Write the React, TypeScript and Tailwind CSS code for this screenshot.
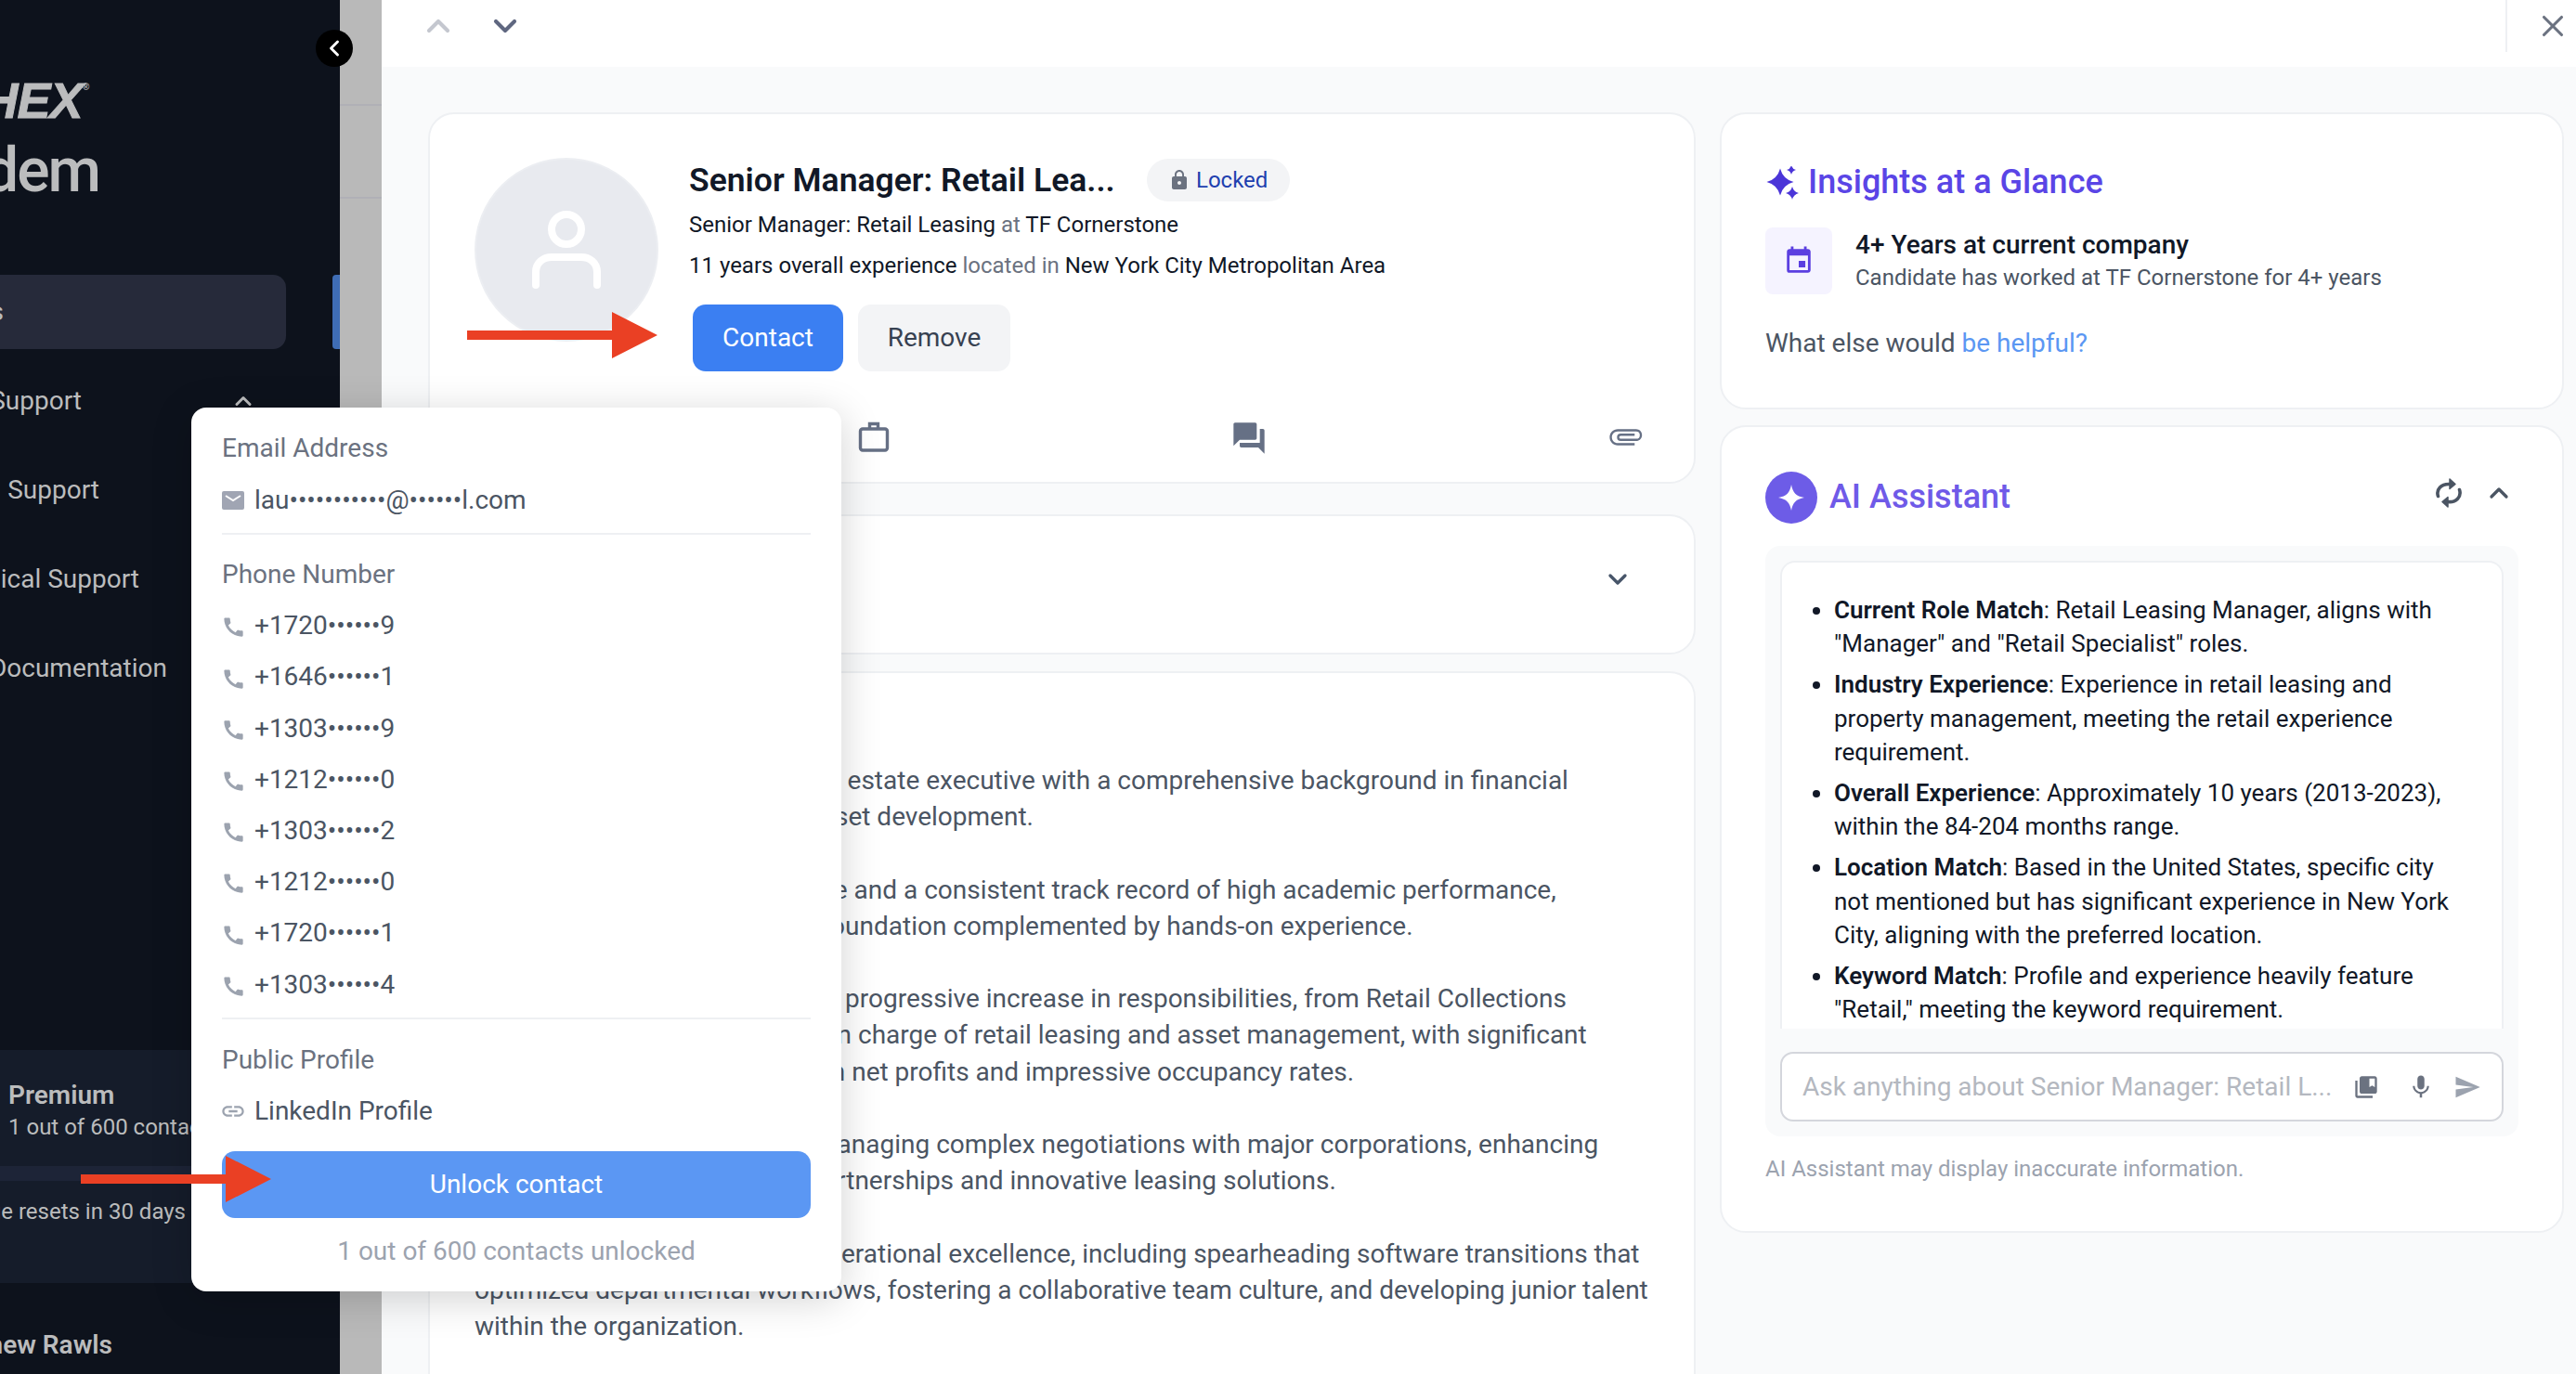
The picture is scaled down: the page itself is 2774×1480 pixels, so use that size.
import { ChevronDown, ChevronLeft, ChevronUp, X } from "lucide-react";
import {
  MdCall,
  MdCollectionsBookmark,
  MdEvent,
  MdForum,
  MdLink,
  MdLock,
  MdMic,
  MdOutlineAttachment,
  MdSend,
} from "react-icons/md";

const phones = [
  "+1720••••••9",
  "+1646••••••1",
  "+1303••••••9",
  "+1212••••••0",
  "+1303••••••2",
  "+1212••••••0",
  "+1720••••••1",
  "+1303••••••4",
];

const aiPoints = [
  ["Current Role Match", ': Retail Leasing Manager, aligns with "Manager" and "Retail Specialist" roles.'],
  ["Industry Experience", ": Experience in retail leasing and property management, meeting the retail experience requirement."],
  ["Overall Experience", ": Approximately 10 years (2013-2023), within the 84-204 months range."],
  ["Location Match", ": Based in the United States, specific city not mentioned but has significant experience in New York City, aligning with the preferred location."],
  ["Keyword Match", ': Profile and experience heavily feature "Retail," meeting the keyword requirement.'],
];

function Arrow({ className }: { className: string }) {
  return (
    <svg viewBox="0 0 205 50" className={className}>
      <path d="M0 20h156V0l49 25-49 25V30H0z" fill="#ea4024" />
    </svg>
  );
}

function ContactPopover() {
  return (
    <div className="absolute left-[206px] top-[439px] z-20 h-[952px] w-[700px] rounded-[16px] bg-white px-[33px] pt-[24px] text-[28px] leading-[39.400px] text-[#4b5563] shadow-[0_8px_44px_rgba(0,0,0,0.18)]">
      <p className="text-[#6b7280]">Email Address</p>
      <div className="mt-[17px] flex items-center gap-[11px]">
        <svg viewBox="0 0 24 20" className="h-[20px] w-[24px] shrink-0">
          <rect width="24" height="20" rx="2" fill="#a0a5b3" />
          <path d="M4 5l8 5 8-5" fill="none" stroke="white" strokeWidth="2" />
        </svg>
        <span>lau•••••••••••@••••••l.com</span>
      </div>
      <div className="mt-[15px] h-[2px] bg-[#eef0f3]" />
      <p className="mt-[23px] text-[#6b7280]">Phone Number</p>
      <div className="mt-[16px] flex flex-col gap-[15.800px]">
        {phones.map((phone, i) => (
          <div key={i} className="flex items-center gap-[9px]">
            <MdCall className="-ml-[1px] h-[27px] w-[27px] shrink-0 translate-y-[2px] text-[#9ca3af]" />
            <span>{phone}</span>
          </div>
        ))}
      </div>
      <div className="mt-[16px] h-[2px] bg-[#eef0f3]" />
      <p className="mt-[24px] text-[#6b7280]">Public Profile</p>
      <div className="mt-[16px] flex items-center gap-[9px]">
        <MdLink className="-ml-[2px] h-[28px] w-[28px] shrink-0 text-[#9ca3af]" />
        <span>LinkedIn Profile</span>
      </div>
      <button className="mt-[23px] flex h-[72px] w-full items-center justify-center rounded-[14px] bg-[#5b97f3] text-white">
        Unlock contact
      </button>
      <p className="mt-[16px] text-center text-[#9ca3af]">1 out of 600 contacts unlocked</p>
    </div>
  );
}

function Sidebar() {
  return (
    <aside className="flex h-full w-[366px] shrink-0 flex-col overflow-hidden bg-[#0d121c] text-[#bbbcbd]">
      <div className="mt-[86px] flex h-[44px] w-[95px] justify-end whitespace-nowrap font-['Liberation_Sans',sans-serif] text-[54px] font-bold italic leading-[44px] tracking-[-1px] [-webkit-text-stroke:1px_#bbbcbd]">
        HEX<span className="text-[10px] leading-[16px] [-webkit-text-stroke:0]">®</span>
      </div>
      <div className="mt-[19px] flex h-[70px] w-[107px] justify-end whitespace-nowrap text-[66px] font-medium leading-[70px] tracking-[-2px]">
        Tandem
      </div>
      <div className="mt-[77px] flex h-[80px] items-center justify-between">
        <div className="flex h-full w-[308px] items-center rounded-r-[14px] bg-[#262a3a] text-[28px]">
          <span className="flex w-[4px] justify-end whitespace-nowrap">Contacts</span>
        </div>
        <div className="h-full w-[8px] rounded-l-[4px] bg-[#3f6db5]" />
      </div>
      <div className="mt-[8px] flex h-[96px] items-center text-[28px]">
        <span className="flex w-[88px] justify-end whitespace-nowrap">Customer Support</span>
        <ChevronUp className="ml-[160px] h-[28px] w-[28px]" strokeWidth={2.500} />
      </div>
      <div className="flex h-[96px] items-center text-[28px]">
        <span className="flex w-[107px] justify-end whitespace-nowrap">Support</span>
      </div>
      <div className="flex h-[96px] items-center text-[28px]">
        <span className="flex w-[150px] justify-end whitespace-nowrap">Technical Support</span>
      </div>
      <div className="flex h-[96px] items-center text-[28px]">
        <span className="flex w-[180px] justify-end whitespace-nowrap">API Documentation</span>
      </div>
      <div className="flex-1" />
      <div className="h-[251px] bg-[#151c2a] pt-[31px]">
        <p className="pl-[9px] text-[28px] font-semibold leading-[36px]">Premium</p>
        <p className="whitespace-nowrap pl-[9px] text-[24px] leading-[32px]">1 out of 600 contacts unlocked</p>
        <div className="mt-[26px] h-[16px] bg-[#1d2437]" />
        <div className="mt-[17px] flex w-[200px] justify-end whitespace-nowrap text-[24px] leading-[32px]">
          Usage resets in 30 days
        </div>
      </div>
      <div className="flex h-[98px] w-[121px] justify-end whitespace-nowrap pt-[49px] text-[28px] font-semibold leading-[36px]">
        Matthew Rawls
      </div>
    </aside>
  );
}

function Scrim() {
  return (
    <div className="h-full w-[45px] shrink-0 bg-[#b9b9b9]">
      <div className="mt-[112px] h-[2px] bg-[#b0b0b6]" />
      <div className="mt-[98px] h-[2px] bg-[#b0b0b6]" />
    </div>
  );
}

function ProfileCard() {
  return (
    <div className="mb-[33px] h-[400px] rounded-[28px] border-2 border-[#eef0f3] bg-white pl-[48px] pr-[55px] pt-[47px]">
      <div className="flex h-[230px] gap-[33px]">
        <div className="flex h-[198px] w-[198px] shrink-0 items-center justify-center rounded-full border-2 border-[#eceef2] bg-[#e8eaef]">
          <svg viewBox="0 0 76 84" className="h-[84px] w-[76px]" fill="none" stroke="white" strokeWidth="8" strokeLinecap="round">
            <circle cx="38" cy="20" r="16" />
            <path d="M5 80V66c0-10 8-16 17-16h32c9 0 17 6 17 16v14" />
          </svg>
        </div>
        <div>
          <div className="flex h-[48px] items-center">
            <h1 className="text-[35.500px] font-semibold leading-[48px] text-[#111827]">Senior Manager: Retail Lea...</h1>
            <span className="ml-[34px] flex h-[46px] w-[154px] items-center justify-center gap-[6px] rounded-full bg-[#f3f4f6] text-[24px] text-[#1e40af]">
              <MdLock className="h-[24px] w-[24px] text-[#6b7280]" />
              Locked
            </span>
          </div>
          <p className="mt-[6px] text-[24px] leading-[36px] text-[#111827]">
            Senior Manager: Retail Leasing <span className="text-[#6b7280]">at</span> TF Cornerstone
          </p>
          <p className="mt-[8px] text-[24px] leading-[36px] text-[#111827]">
            11 years overall experience <span className="text-[#6b7280]">located in</span> New York City Metropolitan Area
          </p>
          <div className="ml-[4px] mt-[24px] flex gap-[16px] text-[28px]">
            <button className="h-[72px] w-[162px] rounded-[14px] bg-[#3b7ff2] text-white">Contact</button>
            <button className="h-[72px] w-[164px] rounded-[14px] bg-[#f3f4f6] text-[#374151]">Remove</button>
          </div>
        </div>
      </div>
      <div className="mt-[52px] flex justify-between pl-[10px] text-[#667085]">
        <span className="h-[36px] w-[36px]" />
        <svg viewBox="0 0 36 36" className="h-[36px] w-[36px]" fill="none" stroke="currentColor" strokeWidth="3.400">
          <rect x="3.500" y="10" width="29" height="23" rx="2.500" />
          <path d="M13.500 10V4.500h9V10" />
        </svg>
        <MdForum className="h-[40px] w-[40px]" />
        <MdOutlineAttachment className="h-[38px] w-[38px]" />
      </div>
    </div>
  );
}

function SummaryCard() {
  return (
    <div className="mt-[18px] h-[800px] rounded-[28px] border-2 border-[#eef0f3] bg-white pl-[48px] pt-[96px] text-[28px] leading-[39.200px] text-[#4b5563]">
      <div className="flex flex-col gap-[39.200px] whitespace-nowrap">
        <p>
          A seasoned and successful real estate executive with a comprehensive background in financial
          <br />
          underwriting, managing, and asset development.
        </p>
        <p>
          She holds a solid finance degree and a consistent track record of high academic performance,
          <br />
          presenting a strong analytical foundation complemented by hands-on experience.
        </p>
        <p>
          Her career path shows a steady progressive increase in responsibilities, from Retail Collections
          <br />
          Coordinator up to a senior role in charge of retail leasing and asset management, with significant
          <br />
          results, including solid growth in net profits and impressive occupancy rates.
        </p>
        <p>
          She has shown great skills in managing complex negotiations with major corporations, enhancing
          <br />
          value through firm long-term partnerships and innovative leasing solutions.
        </p>
        <p>
          She is strongly committed to operational excellence, including spearheading software transitions that
          <br />
          optimized departmental workflows, fostering a collaborative team culture, and developing junior talent
          <br />
          within the organization.
        </p>
      </div>
    </div>
  );
}

function InsightsCard() {
  return (
    <div className="h-[320px] rounded-[28px] border-2 border-[#eef0f3] bg-white px-[47px] pt-[50px]">
      <div className="flex h-[48px] items-center gap-[10px]">
        <svg viewBox="0 0 36 36" className="h-[36px] w-[36px] shrink-0" fill="#4b35d8">
          <path d="M16 2.500Q19 14 30.500 17 19 20 16 31.500 13 20 1.500 17 13 14 16 2.500z" />
          <path d="M28-1Q29 3 33 4 29 5 28 9 27 5 23 4 27 3 28-1z" />
          <path d="M29 22Q30.500 27.500 36 29 30.500 30.500 29 36 27.500 30.500 22 29 27.500 27.500 29 22z" />
        </svg>
        <h2 className="-mt-[2px] text-[36px] font-medium leading-[48px] text-[#5a45e6]">Insights at a Glance</h2>
      </div>
      <div className="mt-[24px] flex gap-[25px]">
        <div className="flex h-[72px] w-[72px] items-center justify-center rounded-[8px] bg-[#f5f3ff]">
          <MdEvent className="h-[34px] w-[34px] text-[#5b3fe0]" />
        </div>
        <div>
          <p className="text-[28px] font-medium leading-[38px] text-[#111827]">4+ Years at current company</p>
          <p className="text-[24px] leading-[32px] text-[#4b5563]">Candidate has worked at TF Cornerstone for 4+ years</p>
        </div>
      </div>
      <p className="mt-[33px] text-[28px] leading-[39.400px] text-[#4b5563]">
        What else would <span className="text-[#5b97f3]">be helpful?</span>
      </p>
    </div>
  );
}

function AssistantCard() {
  return (
    <div className="mt-[17px] h-[870px] rounded-[28px] border-2 border-[#eef0f3] bg-white px-[47px] pt-[48px]">
      <div className="flex h-[56px] items-center gap-[13px]">
        <div className="flex h-[56px] w-[56px] items-center justify-center rounded-full bg-[#6d5ce7]">
          <svg viewBox="0 0 28 28" className="h-[28px] w-[28px]" fill="white">
            <path d="M14 0c1.500 8.500 5 12.500 14 14-9 1.500-12.500 5.500-14 14-1.500-8.500-5-12.500-14-14 9-1.500 12.500-5.500 14-14z" />
          </svg>
        </div>
        <h2 className="-mt-[2px] text-[36px] font-medium leading-[48px] text-[#6f5ae8]">AI Assistant</h2>
        <div className="-mt-[10px] ml-auto flex items-center gap-[24px] pr-[5px] text-[#4b5563]">
          <svg viewBox="0 0 28 34" className="h-[34px] w-[28px]" fill="currentColor" stroke="currentColor" strokeLinejoin="round">
            <path d="M2.500 20.500C0 13 6 7 15 7.500M25.500 13.500C28 21 22 27.500 13 26.500" fill="none" strokeWidth="3.600" strokeLinecap="round" />
            <path d="M15 2l6 5.500-6 5zM13 21.500l-6 5 6 5.500z" strokeWidth="1.500" />
          </svg>
          <ChevronUp className="h-[32px] w-[32px]" strokeWidth={2.500} />
        </div>
      </div>
      <div className="mt-[24px] h-[636px] rounded-[16px] bg-[#f9fafb] px-[16px] pt-[16px]">
        <div className="h-[504px] overflow-hidden rounded-t-[16px] border-2 border-b-0 border-[#eef0f3] bg-white pl-[56px] pr-[48px] pt-[33px]">
          <ul className="flex list-disc flex-col gap-[8px] text-[26px] leading-[36.200px] text-[#111827]">
            {aiPoints.map(([label, rest]) => (
              <li key={label}>
                <strong className="font-semibold">{label}</strong>
                {rest}
              </li>
            ))}
          </ul>
        </div>
        <div className="mt-[25px] flex h-[75px] items-center rounded-[14px] border-2 border-[#d4d6dc] bg-white pl-[22px] pr-[22px]">
          <span className="flex-1 whitespace-nowrap text-[28px] text-[#b4b8c0]">Ask anything about Senior Manager: Retail L...</span>
          <MdCollectionsBookmark className="h-[28px] w-[28px] text-[#6b7280]" />
          <MdMic className="ml-[30px] h-[30px] w-[30px] text-[#6b7280]" />
          <MdSend className="ml-[20px] h-[30px] w-[30px] text-[#9ca3af]" />
        </div>
      </div>
      <p className="mt-[19px] text-[24px] leading-[32px] text-[#9ca3af]">AI Assistant may display inaccurate information.</p>
    </div>
  );
}

export default function App() {
  return (
    <div className="relative flex h-[1480px] w-[2774px] overflow-hidden font-['Roboto',sans-serif]">
      <Sidebar />
      <Scrim />
      <main className="flex h-full flex-1 flex-col overflow-hidden bg-[#f9fafb]">
        <header className="flex h-[72px] shrink-0 items-start justify-between bg-white pl-[41px] pr-[6px]">
          <div className="flex h-[56px] items-center gap-[32px]">
            <ChevronUp className="h-[40px] w-[40px] text-[#c4c7cf]" strokeWidth={2.500} />
            <ChevronDown className="h-[40px] w-[40px] text-[#5f6780]" strokeWidth={2.500} />
          </div>
          <div className="flex h-[56px] items-center gap-[30px] border-l-2 border-[#eef0f3] pl-[30px]">
            <X className="h-[38px] w-[38px] text-[#6b7280]" strokeWidth={2} />
          </div>
        </header>
        <div className="flex flex-1 gap-[26px] overflow-hidden pl-[50px] pt-[49px]">
          <div className="w-[1365px] shrink-0">
            <ProfileCard />
            <div className="flex h-[151px] items-center justify-end rounded-[28px] border-2 border-[#eef0f3] bg-white pb-[12px] pr-[66px]">
              <ChevronDown className="h-[32px] w-[32px] text-[#475569]" strokeWidth={2.500} />
            </div>
            <SummaryCard />
          </div>
          <div className="w-[909px] shrink-0">
            <InsightsCard />
            <AssistantCard />
          </div>
        </div>
      </main>
      <button className="absolute left-[340px] top-[32px] z-10 flex h-[40px] w-[40px] items-center justify-center rounded-full bg-black text-white">
        <ChevronLeft className="h-[28px] w-[28px]" strokeWidth={2.500} />
      </button>
      <ContactPopover />
      <Arrow className="absolute left-[503px] top-[336px] z-30 h-[50px] w-[205px]" />
      <Arrow className="absolute left-[87px] top-[1245px] z-30 h-[50px] w-[205px]" />
    </div>
  );
}
